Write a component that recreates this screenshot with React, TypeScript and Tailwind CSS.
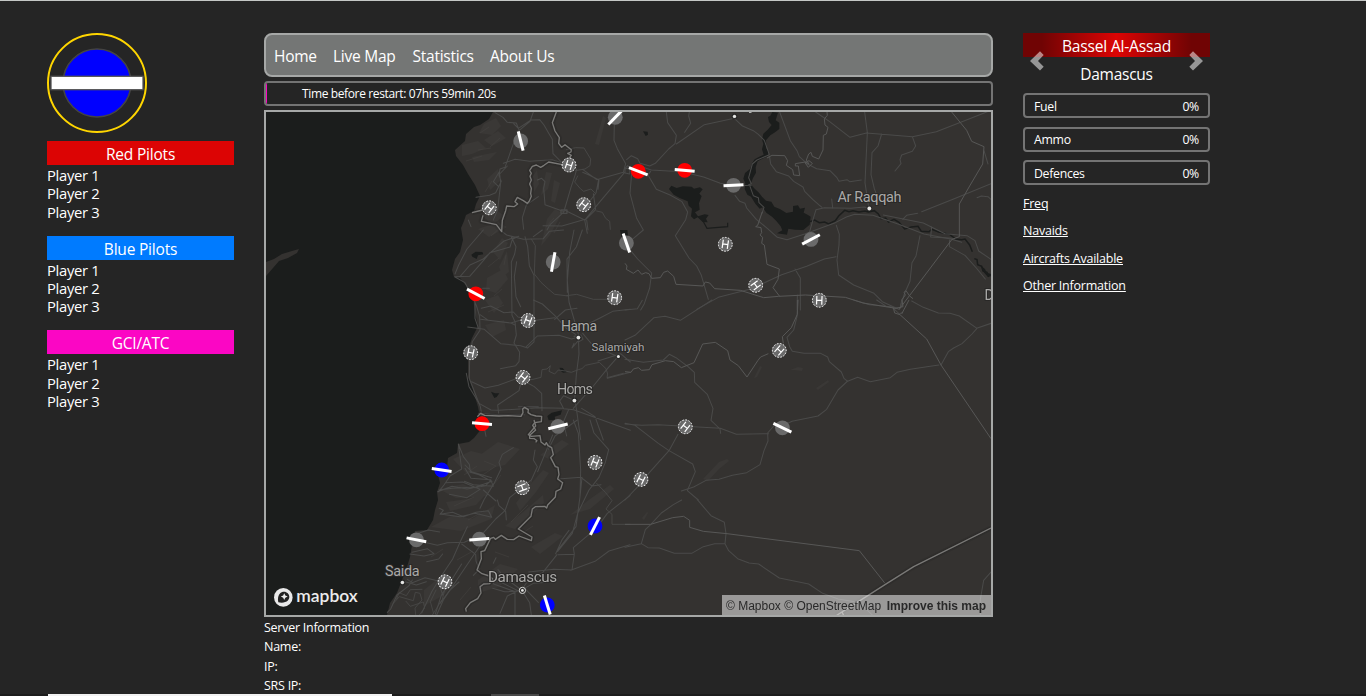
import React from "react";

type Field = { x: number; y: number; color: string; angle: number };
type Pad = { x: number; y: number; angle: number };

const GRAY = "#6a6a6a";
const RED = "#ff0000";
const BLUE = "#0000ff";

const fields: Field[] = [
  { x: 520.7, y: 141, color: GRAY, angle: 76 },
  { x: 615.3, y: 117.3, color: GRAY, angle: -46 },
  { x: 638.3, y: 171.3, color: RED, angle: 21 },
  { x: 684.7, y: 170.3, color: RED, angle: 5 },
  { x: 733.5, y: 185.3, color: GRAY, angle: -3 },
  { x: 811, y: 239.4, color: GRAY, angle: -28 },
  { x: 626.4, y: 243, color: GRAY, angle: 71 },
  { x: 553.2, y: 262, color: GRAY, angle: 100 },
  { x: 475.8, y: 293.8, color: RED, angle: 28 },
  { x: 482, y: 423.7, color: RED, angle: 5 },
  { x: 558, y: 426.4, color: GRAY, angle: -14 },
  { x: 441.7, y: 470, color: BLUE, angle: 9 },
  { x: 416.4, y: 539.8, color: GRAY, angle: 11 },
  { x: 479.3, y: 539.2, color: GRAY, angle: -4 },
  { x: 595, y: 526, color: BLUE, angle: -63 },
  { x: 547.3, y: 605, color: BLUE, angle: 73 },
  { x: 782.4, y: 427.8, color: GRAY, angle: 26 },
];

const pads: Pad[] = [
  { x: 569, y: 165, angle: 18 },
  { x: 489.3, y: 207.8, angle: 38 },
  { x: 583.7, y: 204.7, angle: 38 },
  { x: 725.3, y: 244.3, angle: 8 },
  { x: 755.7, y: 285.3, angle: 54 },
  { x: 819.3, y: 300.3, angle: 2 },
  { x: 614.7, y: 297.7, angle: 8 },
  { x: 528, y: 320.5, angle: 20 },
  { x: 470.7, y: 352.7, angle: 12 },
  { x: 523, y: 377.4, angle: 38 },
  { x: 779.3, y: 350.4, angle: 42 },
  { x: 685.3, y: 426.8, angle: 38 },
  { x: 641, y: 479.4, angle: 26 },
  { x: 595, y: 462.4, angle: 22 },
  { x: 522.3, y: 487.7, angle: 70 },
  { x: 445, y: 581.8, angle: 26 },
];

const land =
  "M493 112L489 119L480 125L474 127L466 134L465 141L455 150L456 156L463 165L468 174L475 185L480 196L476 204L474 211L466 215L464 221L461 228L463 240L460 252L455 259L452 270L454 277L460 278L467 287L473 297L475 313L478 326L472 338L468 350L468 377L473 390L478 407L480 417L482 428L474 438L469 442L458 444L457 453L448 458L447 467L438 475L440 483L437 492L438 500L435 510L433 520L427 530L415 531L412 545L410 557L407 567L402 580L397 593L390 603L387 615L993 617V110H493Z";

function Terrain() {
  return (
    <g>
      <g fill="#403e3c" opacity="0.5">
        <path d="M484 124l12-6 5 8-9 9-13-2zM462 145l16-4 8 7-14 6-10 2zM484 140l14-9 8 7-14 8zM472 157l25-5-8 8-15 2zM487 179l11-10 2 12-10 9zM482 215l13-6 9 7-12 9zM478 229l20-7 9 5-18 10z" />
        <path d="M493 252l9-14 6 5-8 17zM487 278l16-9 5 10-12 14-10-3zM485 300l13-5 5 8-9 10zM499 267l8-16 2 21-6 4zM485 325l19-5 2 10-14 7z" />
        <path d="M546 172l6 1-4 16-7 6zM554 180l6 3-5 20-4-2zM533 176l4-6 2 14-5 8zM547 219l8-10 7 4-12 22-9 11zM595 144l8-28 3 2-7 27z" />
        <path d="M453 459l18-8 16 4 14-4 9 5-19 14-24 4zM439 489l24-5 10 5 22-6-8 13-31 2zM431 527l22-12 19 4 23-14-4 14-30 12zM446 502l22-3 20-7-12 13-26 6zM476 458l22-16 22 7-15 16-18 4z" />
        <path d="M516 503l13-17 14-16 6 3-13 19-16 19zM505 526l17-13 21-18 1 8-29 26zM478 580l22-16 18 5-19 18-21 6zM424 590l16-13 13 6-9 12-20 11zM570 515l20-16 20-14 4 4-24 20zM540 455l22-15 7 4-20 15zM531 547l24-14 8 3-23 18z" />
        <path d="M703 479l16-17 8-3 2 2-10 8-11 12zM754 378l6-12 2 1-5 10zM790 370l8-3 5 1-1 3-8-1zM816 388l12-8 1 2-11 8zM642 518l5-6 1 1-4 7z" />
      </g>
      <g stroke="#4a4846" strokeWidth="1" opacity="0.42" fill="none" strokeLinejoin="round">
        <path d="M480 133l9-6M478 150l13-2M500 138l-10 9M466 161l16-5M485 192l7-11M491 236l10-9M488 267l11-9M494 296l8-7M488 312l16-7M504 265l2-10M546 227l8-9M554 233l6-11" />
        <path d="M464 475l13-9M484 461l12 5-15 10M454 506l20-9M468 520l16-9M501 475l-10 13M520 497l12-16M511 522l17-17M515 538l18-12M431 557l12-8M457 560l16-9M471 587l-11 13M495 552l14 5" />
      </g>
    </g>
  );
}

function Water() {
  return (
    <g fill="#1b1d1c">
      <path d="M266 262l8-3 8-5 10-3 7-2-2 4-9 5-9 3-6 7-7 8z" fill="#343230" />
      <g transform="translate(625 100) scale(.33333)">
        <path d="M442 36L436 47 429 51 432 66 440 75 428 89 415 101 411 118 415 132 411 148 416 164 403 170 389 178 381 190 375 207 360 219 355 236 361 250 359 267 367 284 378 290 391 311 404 326 413 322 424 338 441 350 454 363 467 379 472 391 456 400 486 404 490 386 510 389 535 390 554 374 557 350 549 345 536 338 540 323 525 326 519 316 504 318 504 335 484 339 466 328 448 320 439 305 423 302 411 290 402 278 389 266 377 253 384 234 393 218 392 202 398 184 412 176 429 169 431 156 424 145 423 121 436 106 448 98 463 87 463 68 452 61 459 38Z" />
        <path d="M139 257l16 7 18-5 27 1 7 6 18-4 8 6-10 13 7 7-8 22 2 19-14 8 9 12 20-6 12 2-8 11 5 11-15-1-15-14-11 6-9-9 3-23-10-9-3-13-24-10-18-10-14-17zM54 94l14 1 1 9-7 4z" />
        <path d="M234 363l12 22 25-2 37-3v-12" fill="none" stroke="#1b1d1c" strokeWidth="3.5" />
        <path d="M555 365l14-5 14 8 16-2 12 6 20-10 10-14 18-17 13 4 12-3 18 4 18-3 10 3 18-4 12 10 8 14 14-2 9 12 16-8 15 9 17 20 20-6 20-2 10 15 23 1 9-7 20 8 33 7 18 14 18 2 10-2 14 18 8 20M1048 476l8 3 2 15 12 5 4 14 12 4 5 14" fill="none" stroke="#1b1d1c" strokeWidth="4.5" />
        <path d="M1068 497l12 10 5 11 13 4v7l-10 1-15-17z" />
      </g>
      <g transform="translate(260 230) scale(.33333)">
        <path d="M634 74l13-9 20 1 3 7-16 3-4 11-13-7zM693 485l12 5 13 0-8 11-7 3zM899 413l9 1 7 8 8 4-14 2-9-7zM862 558l13-10 31-7-4 13-18 6 2 9-20 2zM1080 0h22l2 16-8 10-10-2-4-12z" />
      </g>
      <path d="M398 111h3v1h-3z" />
    </g>
  );
}

function Roads() {
  return (
    <g fill="none" stroke="#4a4a49" strokeWidth="3.1" strokeLinejoin="round" strokeLinecap="round">
      <g transform="translate(260 20) scale(.33333)">
        <path d="M705 278l24 14 13 15 27 2 9 24M820 276l-10 28-33 28-19 45-23 65-15 5-3 20 7 17-17 34-18 8-41 6M760 310l15 15 38-25 26-1 13 16 15 26 10 17 2 43 25 25M730 430l35-12 44 6 67-5 42 13M700 600l13-31 9-80-3-27 23-24M718 455l-18 30 16 15" />
        <path d="M1063 310l-1 51 10 25 25 45-7 26-80 22-42-31M1094 457l-74 88-44 53-70 20-57-1M950 447l-4 16-13 39-20 68 61 30 8 40M855 554l58 21-43 39-9 16M832 480l13-5 10 10-4 20 4 48M1000 521l7 48-31 31M1016 479l-8 40-30 39M968 457l19 8 30 15-3 28" />
        <path d="M919 389l28-6 25 1 20 33-2 20-15 10-29 5M1010 573l17 4 10 18 12 9 2 24M953 468l-9 18 17 20 10 8 22-7 11 11" strokeWidth="2.6" />
        <path d="M791 628l-4-35 12-38 36-25M625 600l8 20M980 600l4 30M1095 445l8-8 7 7-1 18-14-3z" />
        <path d="M903 570h18v10h-18z" strokeWidth="4" />
      </g>
      <g transform="translate(625 100) scale(.33333)">
        <path d="M124 36l4 32 26 38-4 25-19 16-40 43-17 8-29-8-7-14-19-9-14 12M193 36l-2 12 6 22-18 27M328 55l-90 19-84 58M328 55l23 22 34 15 15 11 18 18 15 43-37 16-14 12-11 41 8 18-8 3" />
        <path d="M0 206l43-8 36 12 91 5 66 16 50 19 45 8 48-2M77 214l-8 11 25 43 43 18 34 19 17 31-6 23-31 48 41 67 23 24 14 28 21 72M20 220l-5 60 20 75 20 35-34 29-9 27 26 31 42 42-6 45-16 47-11 19M330 286l14 18 16 6 5 14 29 34 33 27 30 27 29 7 53-17 92-34 33-17 25-8 55 3 75 26 78 30 80 15 33 10" />
        <path d="M552 402l12-43 9-30 25-6 80 2 40-4 22 7M464 36l32 86 20 30 7 18 26 23 26 13 40 6 20 20 7 12 24-5 8 6 35-5M719 36l8 62-7 150 12 81M770 102l-11 36-18 20-3 66 10 42 15 40M572 36l42 29 61 47 49-13 47 4 91 7 72-15 98-38 55-22M862 110l10 28-10 16-32 11-5 14 3 12-18 22" />
        <path d="M1098 251l-114 47-94 37M833 358l12-12 33-6M775 345l120 24 65 32 66 6 24 15 11 31 37 25M920 380l-3 31 65 4M885 407l-12 61-12 20-6 56-17 38-13 42M1056 293l13-5 20 2 9 8M974 420l-1 20 47 26 34 38 27 33M1089 192l-12-40" />
        <path d="M434 172l3 20 17 23 37 13 15 16 28 17 5 13 24 24 18 16 10 8M620 297l3 27M375 259l10 28 15 6 2 15 15 14-6 18" />
        <path d="M634 376l9 27-1 32-6 45 5 45 45 30 61 25 25 25 46 21M510 507l16 27v96M215 628l65-36 100-26 90-42 75-25 53-22 35-7M517 585v45" />
      </g>
      <g transform="translate(260 230) scale(.33333)">
        <path d="M585 132l11-27 25-48 49-57M584 140l45-1 41-47 20-24 60-17 7-23 19-9M600 140l30-35 38-17 64-55 38-13M585 141l30 17 25 47 10 24 9 31 1 41-23 34-8 48-1 62 18 47 15 38 10 53 7 36M645 215v50l10 29M754 20l14 30-4 22-10 24 2 160 9 19 4 40-7 24 17 28-2 28-10 12-46 9" />
        <path d="M770 95l-7 45 5 60 14 30M795 20l8 30 5 57 14 29v200l-19 18-21-7-60-6-49-43-50-7M664 235l28-7 40 20 28-2 14 15 18 4M662 268l90 11 41-12M660 254l25 17 68 8 12 6M668 175h20" />
        <path d="M820 210l27 12 37 34 34 38 30 20M884 263l-56 8-35-6M942 0l-13 67-7 84 5 65 14 48 14 48 2 60-8 62-5 70 7 45 11 80M799 350l33-32 65-2 38 11 20-6M968 310l32 38 68 29M884 268l32-28 35-5M967 0l-18 51-28 36 1 100" />
        <path d="M945 512l-34-15-12 16 12 23 30 3 170 62M910 535l-72-2-122 8-23-1-36-20-30-50-8-40M716 550l-3-25 64-43 11-44M635 455l40 19 40-8 73-27 15 20 20 11 22 20 1 52M775 530h60M655 550l61 4 78 0M965 535l40 25 25 70M925 541l-15 35 10 42M1042 445l69-18M940 535l60-67 43-53 31-35M1020 264l-44 22M1020 264l38-20 53-6M1014 393l68-22 29 25" />
        <path d="M920 197l30-4 50 15 40 0 22 9M814 27l12 20-3 85 20 25 22 20 19 16 41 5" strokeWidth="2.6" />
        <path d="M792 451l27-3 24-6 3-23 15-2 10-10-4 17 17 8 11-12 21 3 18 4 21-8 11-3 10-10 42-9 20 19 5 16-2 11 49-13" strokeWidth="2.6" />
        <path d="M942 340l-6 14 22-26M955 323l-13-4 21-4 6 13-12 7zM720 0l20 15 50 13 60-2 18-22 43-4M820 20l27-20" />
      </g>
      <g transform="translate(625 300) scale(.33333)">
        <path d="M0 30l37-4 15-25M0 120l30-14 57-53 33-4 46 12 95-61M0 178l55 9 60-7 18-17 20 10 36 27 19 17 1 30 38 36 17 42-6 36 27 26 2 13M0 372l50 4 50-2 186 11 48 18 97-2M0 370l30 6 70 54 32 22 71 40 8 23-24 57 33 28M159 403l-27 49-27 30-32 36-28 35-45 47M520 0l-4 50-10 40-20 22 8 28 8 14 35 6h50l21 11 5 14 36 31 8 19 11 9 30-12 38 13 60-12 20-16 40-9 70-11 16-2" />
        <path d="M668 243l-29 27-19 32-15 26-26 20-78 16-23 11M446 378l-18 21 1 24-12 29-12 42-40 24-43 8-40 12-39 3-37 20-37 12M860 3l35 19 45 17 35 1 28 8 53 37-15 17-30 29-25 13-16 11-22 40M1055 85l43-15M686 0l48 14 66 6 23 22 10-5M830 0l-4 23-22 2M755 0l30 20" />
      </g>
      <g transform="translate(625 500) scale(.33333)">
        <path d="M0 142l49-11 20 12 34 1 45 16h52l35-20 34-9h31l11 21 27 24 34 13 29 3 62 42 88 18 42 28 46 17 50 8M300 131l3-30-5-34-40-20-41-48M49 131l12-42 16-15 32-35 36-25 25-14M1098 216l-22 25-10 57v48M703 308l40 38" />
      </g>
      <g transform="translate(370 420) scale(.33333)">
        <path d="M265 72l15 38 18 23 3 24 26 7 35 18-15 15-56 10-45-8-43 16M265 72l10 75-35 21-18 27-16 20M285 135l20 20 60 18M285 145l18 30 59 4 8 20-60-5-27-10M226 188l52-2 52 22-39 25-53-10M207 210l40-5 70-4 49-17M208 265l12 6-10 12 38-6 32 13 38-13 37-5 10 20-50-12-45 10-55-7" />
        <path d="M145 340l30-10 34 6M170 368l32 8 30-8 51-1 53-24 41-46 28-25 14-39 34-27M330 265l12-26 32-52 19-40-6-20 10-24 33-20M382 240l5 17 20 17 2 26M340 210l38 33M275 372l42 31 1 20 10 25-18 18M292 320l-22 47-22 50-30 45-32 52-31 65M328 380l-61 90-47 70-20 45" />
        <path d="M126 397l46-11 20 15-30 7-42-6M112 478l15 10 38-15 40 10 13 42M105 485l34 10 30-10M170 425l36-8 12-15M275 432l-33 52-28 42-18 56M210 550l30-40 27-24M127 480l-10 17-36 28-19 42-10 10" />
        <path d="M70 550l18-20 42 12 6-25 14 3 6 20-21 24 2 20M80 537l7-19 22 9 12-18 35-1M108 544l13 15 39-13 4 18-16 21M198 510l-17 35 10 36M225 505l-8 33-30 47" strokeWidth="2.4" />
        <path d="M610 0l15 40 7 110-2 80-12 90-50 64-11 16M660 0l12 39 44 50-10 38-19 45-30 38-34 70-16 60-44 54M630 230l6-58M565 177l68-5 33 26 27-4M557 401l20-43 20-27M565 404l48-1-3-20 40-34 35-28M613 402l-7 48-55-2-75 8M690 310l22-30 68-53M780 374l-63 19-42 31-73 27M455 510l20-30 43-22 43-54M390 580l22-52 32-16M435 585v-70l-64-23-3-20M444 512l-45-22-25-19M455 510l24 38 5 37M462 503l43 44M450 507l-20-15-27-20-19-23M462 506l28-16 42-3M450 513l-46 2-36-10M370 430l8-17" />
        <path d="M680 190l26 27 20 25-18 25 18 16v30h54" strokeWidth="2.6" />
        <path d="M495 90l-5 30 12 20-18 40-45 37M548 45l-45 110M622 0l-67 48-20 40" />
      </g>
    </g>
  );
}

const coastBorderNorth =
  "M889 276l-12 32 8 25 13 20-2 17 9 12 10-8 19 15-1 7-10 4 11 6-5 6 4 11M907 434l-41-8-14 10-10 6-13-7-12 4-8 12 5 9-4 9 4 11-5 12 5 13-2 16 2 8-6 14-6 7-12-8-18-10-7 13 8 7-11 8-22-2-3 14-10 29-2 34-16-21-45-10 5-18M668 570l-32 8";
const lebanonNorth =
  "M652 560l10-10 12 6 43 2 28-1 38 2 6-11-1-11 6-5 11 7-1 9 9 6 15 4 17 1-1 16-20 3-6 8 9 14-18 16v9l14 1 8 6-4 5";
const lebanonEast =
  "M492 0l5 18-22 26 9 5 26-2 3 19 12 9 4-7 5 9 11 6 5 21-8 9 14 27 8 2 3 22-4 13 15 11-6 19-14 7-2 17-23 24-3 9-6-5-28 1-9 7-4 22-38 38 41 24-2 11-37-14-16 11-19-1-18-12-18 12-5-6-9 3-18 37-11 3 1 21-13 34 15 11 22 7 10 9-9 14-18 1-11 8 3 19-10 17-22 12-14 18 2 9";
const jordan = "M1098 84L866 200 780 254 700 305 635 346M650 334l6 12";

function CountryLines() {
  return (
    <>
      <path transform="translate(260 20) scale(.33333)" d={coastBorderNorth} />
      <path transform="translate(260 230) scale(.33333)" d={lebanonNorth} />
      <path transform="translate(370 420) scale(.33333)" d={lebanonEast} />
      <path transform="translate(625 500) scale(.33333)" d={jordan} />
    </>
  );
}

function Borders() {
  return (
    <g fill="none" strokeLinejoin="round">
      <g stroke="#575756" strokeWidth="3">
        <g transform="translate(625 100) scale(.33333)">
          <path d="M606 36l1 10-9 11 2 18 9 7-5 20-9 4-1 44-13 27-19-8-4-12-7 5-7 18 8 12-11-6-30 5v7h9l4 29-18-2-3-16-19-13 4-14-9-15-38-1-15 8M412 335l-14 41-6 4 16 3 2 15-5 7 8 7-3 18 8 5 8 58 37 14-4 31-15 25 20 26" />
          <path d="M540 188l12-6 10 8-12 12z" />
          <path d="M980 36l45 55 15 33 37 16-4 52-39 66-31 54v98l-22 8-160 212M0 490l6 8-2 10 21 12 14-10 11 13 12-5 10 3 8 14 26-2 10-16 12-4 18 16 7 24 81 5 7-12 13 3 15 17 77 5 70 22 45-4 80-4 120 7 53 17 99 16 21-5-3-21 10-14-4-8 6-5 11 16 10 8" />
        </g>
        <g transform="translate(625 300) scale(.33333)">
          <path d="M830 42l22-42M805 23l4 16 16 5 80 73 43 78 150 221M0 215l18 2 7-10 15-4 10 8 23-2 8-15 40-12 25 3 23 18 38-15 26-56 38-5 37 25 7 28 25 17 26 34 33-50 8-10 23-10M475 130l-3-20 27-27 18-40V0" />
        </g>
        <g transform="translate(625 500) scale(.33333)">
          <path d="M0 73h77l66-20 33-4 18 12v21l41 12 71 7 397 51 77 98" />
        </g>
      </g>
      <g stroke="#1c1c1c" strokeWidth="13" opacity=".28">
        <CountryLines />
      </g>
      <g stroke="#7a7977" strokeWidth="4">
        <CountryLines />
      </g>
    </g>
  );
}

function City({ x, y, size, width, children, dot }: { x: number; y: number; size: number; width: number; children: string; dot: [number, number, number] }) {
  return (
    <g>
      <circle cx={dot[0]} cy={dot[1]} r={dot[2] + 1.2} fill="#222" opacity=".6" />
      <circle cx={dot[0]} cy={dot[1]} r={dot[2]} fill="#e6e6e4" />
      <text x={x} y={y} fontSize={size} textLength={width} fontFamily="Roboto, sans-serif" fill="#aaa9a7" stroke="#292827" strokeWidth="2" paintOrder="stroke">
        {children}
      </text>
    </g>
  );
}

function MapView() {
  return (
    <svg className="block h-full w-full" viewBox="266 112 725 503">
      <rect x="266" y="112" width="725" height="503" fill="#1b1d1c" />
      <path d={land} fill="#343230" />
      <Terrain />
      <Water />
      <Roads />
      <Borders />
      <City x={837.5} y={202} size={14.5} width={64} dot={[869.3, 208.5, 1.9]}>Ar Raqqah</City>
      <City x={561} y={331} size={14} width={36} dot={[578.4, 337.6, 1.9]}>Hama</City>
      <City x={591.5} y={351.3} size={11.6} width={53} dot={[618.4, 356.6, 1.5]}>Salamiyah</City>
      <City x={557} y={394} size={14.3} width={36} dot={[574.4, 400.6, 1.9]}>Homs</City>
      <City x={385} y={576.3} size={14.4} width={34.5} dot={[402.4, 582.5, 1.8]}>Saida</City>
      <City x={488} y={582.2} size={15.2} width={69} dot={[522.4, 590.4, 1.4]}>Damascus</City>
      <circle cx="522.4" cy="590.4" r="3.1" fill="none" stroke="#d6d6d4" strokeWidth="1" />
      <City x={984.5} y={300} size={14} width={9} dot={[734.5, 116.4, 1.7]}>D</City>
      <path d="M749 112h2.5v.8h-2.5z" fill="#ccc" />
      {fields.map((f) => (
        <g key={`${f.x}-${f.y}`}>
          <circle cx={f.x} cy={f.y} r="7.4" fill={f.color} />
          <path d="M-10 0H10" stroke="#fff" strokeWidth="3" transform={`translate(${f.x} ${f.y}) rotate(${f.angle})`} />
        </g>
      ))}
      {pads.map((p) => (
        <g key={`${p.x}-${p.y}`} transform={`translate(${p.x} ${p.y}) rotate(${p.angle})`} fill="none" stroke="#fff">
          <circle r="7.2" fill="#6a6a6a" stroke="none" />
          <circle r="6.9" strokeWidth=".9" strokeDasharray="1.6 1.5" />
          <path d="M-2.6 -4.3V4.3M2.6 -4.3V4.3M-2.6 0H2.6" strokeWidth="1.2" />
        </g>
      ))}
      <circle cx="283.3" cy="597.4" r="9.3" fill="#e9e9e9" />
      <path d="M278.3 602.3c-.8-3.7-.2-7.2 2.1-9.2 2.2-1.9 5.5-1.8 7.4.2 2.1 2.1 2.1 5.3.1 7.3-2.1 2.1-6.1 2.6-9.6 1.7z" fill="#222" />
      <path d="M284.2 593.2l1.1 2.4 2.4 1-2.4 1.1-1.1 2.4-1-2.4-2.4-1.1 2.4-1z" fill="#eee" />
      <text x="296.3" y="601.8" fontSize="16.5" fontWeight="600" textLength="61.5" lengthAdjust="spacingAndGlyphs" fontFamily="Lato, sans-serif" fill="#ececec" stroke="#222" strokeWidth="1.2" paintOrder="stroke">
        mapbox
      </text>
    </svg>
  );
}

const groups = [
  { title: "Red Pilots", bg: "bg-[#dc0404]" },
  { title: "Blue Pilots", bg: "bg-[#007bff]" },
  { title: "GCI/ATC", bg: "bg-[#fb06c4]" },
];

const nav = [
  { label: "Home", width: "w-[43px]" },
  { label: "Live Map", width: "w-[63.5px]" },
  { label: "Statistics", width: "w-[61.5px]" },
  { label: "About Us", width: "w-[66px]" },
];

export default function App() {
  return (
    <div className="flex h-[696px] w-[1366px] flex-col overflow-hidden border-t border-[#c5c8c6] bg-[#252525] font-['Open_Sans',sans-serif] text-white">
      <main className="flex min-h-0 flex-1 gap-[30px] pt-8 pl-[47px]">
        <aside className="flex w-[187px] flex-col">
          <svg className="mb-2 h-[100px] w-[100px]" viewBox="0 0 100 100">
            <circle cx="50" cy="50" r="49" fill="none" stroke="#ffd600" strokeWidth="2" />
            <circle cx="50" cy="50" r="34" fill="#00f" stroke="#444" strokeWidth="1.6" />
            <rect x="4" y="43.3" width="92" height="13.4" fill="#fff" stroke="#555" strokeWidth="1.3" />
          </svg>
          {groups.map((g) => (
            <section key={g.title} className="mb-[14.67px]">
              <h2 className={`h-6 text-center text-[15.5px] leading-[26px] tracking-[-0.2px] ${g.bg}`}>{g.title}</h2>
              <ul className="pt-px text-[14.8px] leading-[18.33px] tracking-[-0.3px]">
                <li>Player 1</li>
                <li>Player 2</li>
                <li>Player 3</li>
              </ul>
            </section>
          ))}
        </aside>

        <section className="flex w-[729px] flex-col">
          <nav className="flex h-11 shrink-0 items-center gap-4 rounded-lg border-2 border-[#a6a8a7] bg-[#747675] px-2 pt-1 text-[15.5px] tracking-[-0.25px] whitespace-nowrap">
            {nav.map((n) => (
              <a key={n.label} className={n.width}>{n.label}</a>
            ))}
          </nav>
          <div className="mt-1 flex h-[25px] shrink-0 items-center overflow-hidden rounded border-2 border-[#747474]">
            <span className="h-full w-px bg-[#fb06c4]" />
            <span className="pl-[35px] text-[12px] tracking-[-0.37px]">Time before restart: 07hrs 59min 20s</span>
          </div>
          <div className="relative mt-1 h-[507px] shrink-0 border-2 border-[#a6a8a7]">
            <MapView />
            <div className="absolute right-0 bottom-0 flex h-5 w-[269px] items-center justify-between bg-white/50 pt-px pr-[5px] pl-1 font-['Liberation_Sans',sans-serif] text-[12px] whitespace-nowrap text-[#292929]">
              <span>© Mapbox © OpenStreetMap</span>
              <b>Improve this map</b>
            </div>
          </div>
          <div className="pt-[0.6px] text-[12.5px] leading-[19.5px] tracking-[-0.26px]">
            <p>Server Information</p>
            <p>Name:</p>
            <p>IP:</p>
            <p>SRS IP:</p>
          </div>
        </section>

        <aside className="relative flex w-[187px] flex-col">
          <h2 className="h-6 bg-[linear-gradient(90deg,#700404_10%,#dc0404_50%,#700404_90%)] text-center text-[15.6px] leading-[26px] tracking-[-0.2px]">Bassel Al-Assad</h2>
          <p className="h-9 pt-1 text-center text-[15.5px] leading-[26px] tracking-[-0.25px]">Damascus</p>
          <svg className="absolute top-[18px] left-[7px] h-5 w-[14px]" viewBox="0 0 14 20">
            <path d="M0 10L10 0.3 13.7 4 8 10 13.7 15.7 10 19.5Z" fill="#fff" fillOpacity=".52" />
          </svg>
          <svg className="absolute top-[18px] right-[7px] h-5 w-[14px]" viewBox="0 0 14 20">
            <path d="M14 10L4 0.3.3 4 6 10 .3 15.7 4 19.5Z" fill="#fff" fillOpacity=".52" />
          </svg>
          <div className="flex flex-col gap-[8.5px]">
            {["Fuel", "Ammo", "Defences"].map((s) => (
              <div key={s} className="flex h-[25px] items-center justify-between rounded border-2 border-[#747474] px-[9px] pt-[3px] text-[12.3px] tracking-[-0.3px]">
                <span>{s}</span>
                <span>0%</span>
              </div>
            ))}
          </div>
          <div className="flex flex-col pt-[5px] text-[12.5px] leading-[27.4px] tracking-[-0.23px] underline">
            <a>Freq</a>
            <a>Navaids</a>
            <a>Aircrafts Available</a>
            <a>Other Information</a>
          </div>
        </aside>
      </main>
      <footer className="flex h-0.5 shrink-0 bg-[#1d1d1d] pl-12">
        <span className="w-[344px] bg-[#f2f2f2]" />
        <span className="ml-[99px] w-12 bg-[#484848]" />
      </footer>
    </div>
  );
}
